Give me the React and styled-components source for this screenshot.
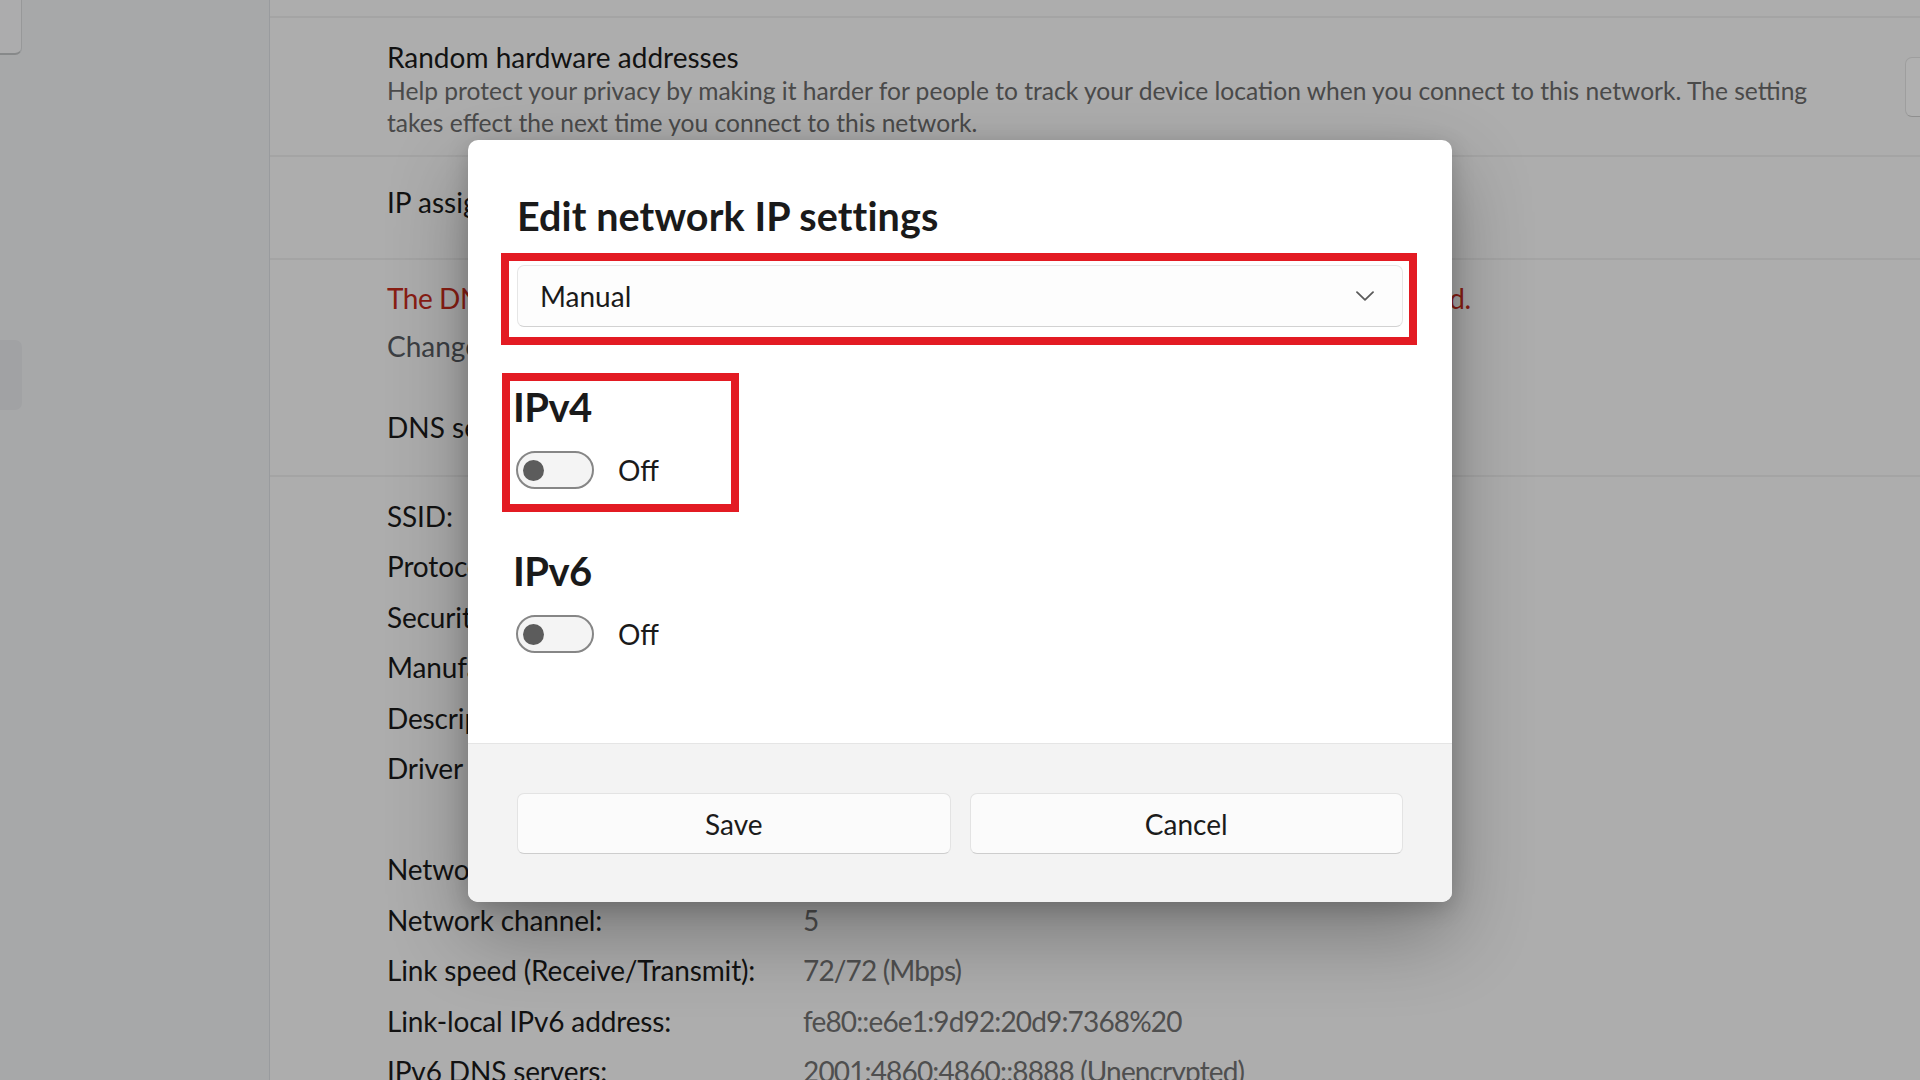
import React from 'react';
import styled, { createGlobalStyle } from 'styled-components';

const GlobalStyle = createGlobalStyle`
  html, body {
    margin: 0;
    padding: 0;
  }
  body {
    font-family: Lato, "Open Sans", sans-serif;
  }
  * {
    box-sizing: border-box;
  }
`;

const Screen = styled.div`
  position: relative;
  width: 1920px;
  height: 1080px;
  overflow: hidden;
  display: flex;
  background: #f8f8f8;
  font-family: Lato, "Open Sans", sans-serif;
`;

const Sidebar = styled.aside`
  width: 270px;
  flex: none;
  display: flex;
  flex-direction: column;
  background: #eff1f3;
  border-right: 1px solid #dcdfe2;
`;

const SearchStub = styled.div`
  width: 22px;
  height: 55px;
  background: #f6f7f8;
  border-right: 1px solid #d8dadc;
  border-bottom: 2px solid #c2c4c6;
  border-bottom-right-radius: 7px;
`;

const NavStub = styled.div`
  margin-top: 285px;
  width: 22px;
  height: 70px;
  background: #e7e9eb;
  border-radius: 0 7px 7px 0;
`;

const Main = styled.main`
  flex: 1;
  min-width: 0;
  display: flex;
  flex-direction: column;
`;

const Card = styled.section`
  display: flex;
  flex-direction: ${p => (p.$column ? 'column' : 'row')};
  align-items: flex-start;
  height: ${p => p.$h}px;
  padding: ${p => p.$pt || 0}px 0 0 117px;
  border-bottom: 2px solid #ebebeb;
  flex: none;
`;

const TextBlock = styled.div`
  flex: 1;
  min-width: 0;
`;

const Text = styled.div`
  font-size: 28px;
  line-height: 36px;
  white-space: nowrap;
  margin-top: ${p => p.$mt || 0}px;
  letter-spacing: ${p => (p.$tone === 'error' ? '-0.44px' : 'normal')};
  color: ${p =>
    p.$tone === 'error' ? '#c42b1c' : p.$tone === 'muted' ? '#565b61' : '#1b1b1b'};
`;

const Description = styled.div`
  font-size: 24.6px;
  line-height: 32px;
  color: #6a6a6a;
  white-space: nowrap;
  margin-top: 0;
`;

const EdgeControl = styled.div`
  flex: none;
  width: 60px;
  height: 60px;
  margin: 18px -45px 0 auto;
  background: #fdfdfd;
  border: 1px solid #e2e2e2;
  border-bottom-color: #cdcdcd;
  border-radius: 7px;
`;

const Details = styled.dl`
  margin: 0;
  padding: 14px 0 0 117px;
  display: grid;
  grid-template-columns: 416px 1fr;
  font-size: 28px;
  line-height: 50.45px;
  white-space: nowrap;
`;

const Term = styled.dt`
  margin: 0;
  color: #1b1b1b;
  letter-spacing: -0.15px;
`;

const Value = styled.dd`
  margin: 0;
  color: #717171;
  letter-spacing: -0.85px;
`;

const Backdrop = styled.div`
  position: absolute;
  inset: 0;
  background: rgba(0, 0, 0, 0.3);
  display: flex;
  justify-content: center;
  align-items: flex-start;
  padding-top: 140px;
`;

const Dialog = styled.div`
  width: 984px;
  background: #ffffff;
  border-radius: 10px;
  overflow: hidden;
  box-shadow: 0 32px 80px rgba(0, 0, 0, 0.3), 0 6px 22px rgba(0, 0, 0, 0.18);
  color: #1a1a1a;
`;

const Body = styled.div`
  padding: 50px 49px 67px;
`;

const Title = styled.h2`
  margin: 0;
  font-size: 39.5px;
  line-height: 52px;
  font-weight: 700;
  letter-spacing: 0.1px;
`;

const Highlight = styled.div`
  border: 8px solid ${p => (p.$on ? '#e31b23' : 'transparent')};
`;

const SelectFrame = styled(Highlight)`
  margin: 11px -14px 0 -16px;
  padding: 4px 6px 10px 8px;
`;

const SectionFrame = styled(Highlight)`
  width: 237px;
  margin: ${p => p.$mt}px 0 0 -15px;
  padding: 2px 0 15px 6px;
`;

const Select = styled.div`
  height: 62px;
  display: flex;
  align-items: center;
  justify-content: space-between;
  padding: 0 28px 0 22px;
  background: #fdfdfd;
  border: 1px solid #e6e6e6;
  border-bottom-color: #d2d2d2;
  border-radius: 7px;
  font-size: 28px;
`;

const SectionTitle = styled.h3`
  margin: 0 0 0 -3px;
  font-size: 40px;
  line-height: 48px;
  font-weight: 700;
  letter-spacing: -0.6px;
`;

const ToggleRow = styled.div`
  margin-top: 20px;
  display: flex;
  align-items: center;
  font-size: 28px;
`;

const Track = styled.div`
  width: 78px;
  height: 38px;
  flex: none;
  display: flex;
  align-items: center;
  border: 2px solid #868686;
  border-radius: 19px;
  background: #f4f4f4;
`;

const Knob = styled.div`
  width: 21px;
  height: 21px;
  margin-left: 5px;
  border-radius: 50%;
  background: #5c5c5c;
`;

const ToggleLabel = styled.span`
  margin-left: 24px;
  line-height: 38px;
`;

const Footer = styled.div`
  display: grid;
  grid-template-columns: 1fr 1fr;
  gap: 19px;
  padding: 49px 49px 48px;
  background: #f3f3f3;
  border-top: 1px solid #e5e5e5;
`;

const Button = styled.button`
  height: 61px;
  font-family: inherit;
  font-size: 28px;
  color: #1b1b1b;
  background: #fbfbfb;
  border: 1px solid #e3e3e3;
  border-bottom-color: #cdcdcd;
  border-radius: 7px;
  padding: 0;
`;

const Chevron = () => (
  <svg width="18" height="10" viewBox="0 0 18 10" fill="none">
    <path d="M1 1.2 L9 8.8 L17 1.2" stroke="#5a5a5a" strokeWidth="1.8" strokeLinecap="round" strokeLinejoin="round" />
  </svg>
);

const Toggle = ({ label }) => (
  <ToggleRow>
    <Track>
      <Knob />
    </Track>
    <ToggleLabel>{label}</ToggleLabel>
  </ToggleRow>
);

const details = [
  ['SSID:', 'HomeNetwork_2G'],
  ['Protocol:', 'Wi-Fi 4 (802.11n)'],
  ['Security type:', 'WPA2-Personal'],
  ['Manufacturer:', 'Intel Corporation'],
  ['Description:', 'Intel(R) Wi-Fi 6 AX201 160MHz'],
  ['Driver version:', '22.150.0.3'],
  ['', ''],
  ['Network band:', '2.4 GHz'],
  ['Network channel:', '5'],
  ['Link speed (Receive/Transmit):', '72/72 (Mbps)'],
  ['Link-local IPv6 address:', 'fe80::e6e1:9d92:20d9:7368%20'],
  ['IPv6 DNS servers:', '2001:4860:4860::8888 (Unencrypted)'],
];

const App = () => {
  return (
    <Screen>
      <GlobalStyle />
      <Sidebar>
        <SearchStub />
        <NavStub />
      </Sidebar>
      <Main>
        <Card $h={18} />
        <Card $h={139} $pt={21}>
          <TextBlock>
            <Text>Random hardware addresses</Text>
            <Description>
              Help protect your privacy by making it harder for people to track your device location when you connect to this network. The setting
              <br />
              takes effect the next time you connect to this network.
            </Description>
          </TextBlock>
          <EdgeControl />
        </Card>
        <Card $h={103} $pt={27}>
          <Text>IP assignment:</Text>
        </Card>
        <Card $h={217} $pt={20} $column>
          <Text $tone="error">The DNS server settings for this network are set by your organization and can't be modified.</Text>
          <Text $tone="muted" $mt={12}>Change them in your network adapter properties.</Text>
          <Text $mt={45}>DNS server assignment:</Text>
        </Card>
        <Details>
          {details.map(([term, value], i) => (
            <React.Fragment key={i}>
              <Term>{term || '\u00a0'}</Term>
              <Value>{value || '\u00a0'}</Value>
            </React.Fragment>
          ))}
        </Details>
      </Main>

      <Backdrop>
        <Dialog>
          <Body>
            <Title>Edit network IP settings</Title>
            <SelectFrame $on>
              <Select>
                <span>Manual</span>
                <Chevron />
              </Select>
            </SelectFrame>
            <SectionFrame $on $mt={28}>
              <SectionTitle>IPv4</SectionTitle>
              <Toggle label="Off" />
            </SectionFrame>
            <SectionFrame $mt={25}>
              <SectionTitle>IPv6</SectionTitle>
              <Toggle label="Off" />
            </SectionFrame>
          </Body>
          <Footer>
            <Button>Save</Button>
            <Button>Cancel</Button>
          </Footer>
        </Dialog>
      </Backdrop>
    </Screen>
  );
};

export default App;
